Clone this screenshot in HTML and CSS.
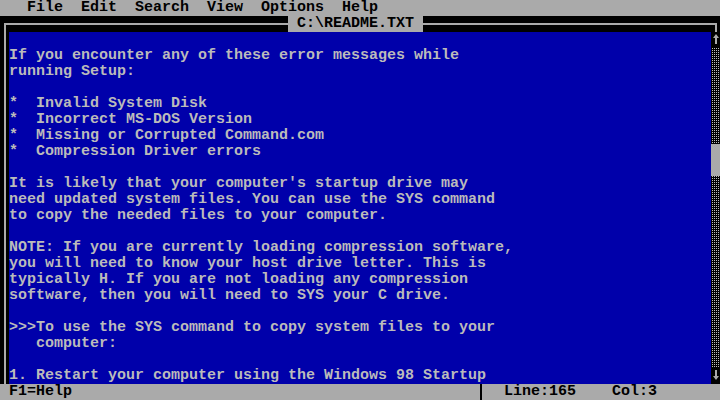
FILE: index.html
```html
<!DOCTYPE html>
<html>
<head>
	<title>C:\README.TXT</title>
	<link rel="stylesheet" href="styles.css">
</head>
<body>
<div class="screen">
	<div class="menu">   File  Edit  Search  View  Options  Help</div>

	<div class="titlebar">
		<span class="rule rule_l"></span><span class="title"> C:\README.TXT </span><span class="rule rule_r"></span>
	</div>

	<div class="main">
		<div class="edge"></div>
		<pre class="text">

If you encounter any of these error messages while
running Setup:

*  Invalid System Disk
*  Incorrect MS-DOS Version
*  Missing or Corrupted Command.com
*  Compression Driver errors

It is likely that your computer's startup drive may
need updated system files. You can use the SYS command
to copy the needed files to your computer.

NOTE: If you are currently loading compression software,
you will need to know your host drive letter. This is
typically H. If you are not loading any compression
software, then you will need to SYS your C drive.

&gt;&gt;&gt;To use the SYS command to copy system files to your
   computer:

1. Restart your computer using the Windows 98 Startup</pre>
		<div class="scroll">
			<div class="arrow">
				<svg width="9" height="16" viewBox="0 0 9 16"><path d="M5 2 L8 6 H6 V12 H4 V6 H2 Z" fill="#aaa"/></svg>
			</div>
			<div class="track"><div class="thumb"></div></div>
			<div class="arrow">
				<svg width="9" height="16" viewBox="0 0 9 16"><path d="M4 2 H6 V8 H8 L5 12 L2 8 H4 Z" fill="#aaa"/></svg>
			</div>
		</div>
	</div>

	<div class="status">
		<span class="help">F1=Help</span><span class="sep"></span><span class="pos">  Line:165    Col:3</span>
	</div>
</div>
</body>
</html>
```

FILE: styles.css
```css
body {margin: 0; background: #000; font: bold 15px/16px "Liberation Mono", "DejaVu Sans Mono", monospace;}
.screen {width: 720px; height: 400px; display: flex; flex-direction: column; overflow: hidden;}

.menu {height: 16px; background: #aaa; color: #000; white-space: pre;}

.titlebar {height: 16px; display: flex; background: #000;}
.rule {box-sizing: border-box; height: 9px; margin-top: 7px; border-top: 2px solid #aaa;}
.rule_l {width: 284px; margin-left: 4px; border-left: 2px solid #aaa;}
.rule_r {flex: 1; margin-right: 3px; border-right: 2px solid #aaa;}
.title {background: #aaa; color: #000; white-space: pre;}

.main {display: flex; height: 352px;}
.edge {width: 9px; background: linear-gradient(to right, #000 4px, #aaa 4px 6px, #000 6px);}
.text {margin: 0; width: 702px; background: #0000aa; color: #bbb; font: inherit; white-space: pre; overflow: hidden;}

.scroll {width: 9px; display: flex; flex-direction: column; background: #000;}
.arrow {height: 16px;}
.arrow svg {display: block;}
.track {flex: 1; background: #000 conic-gradient(from 90deg at 1px 1px, #000 0 75%, #bbb 0) 0 0 / 2px 2px;}
.thumb {margin-top: 96px; height: 32px; background: #aaa;}

.status {height: 16px; display: flex; background: #aaa; color: #000; white-space: pre;}
.help {width: 468px; padding-left: 9px;}
.sep {width: 9px; background: linear-gradient(to right, transparent 3px, #000 3px 5px, transparent 5px);}
```
